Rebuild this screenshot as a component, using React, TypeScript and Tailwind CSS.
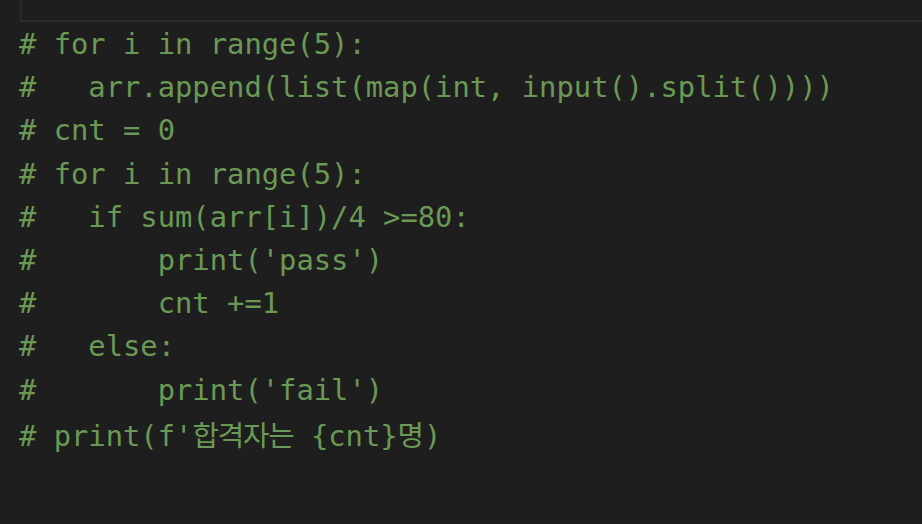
const lines = [
  "# for i in range(5):",
  "#   arr.append(list(map(int, input().split())))",
  "# cnt = 0",
  "# for i in range(5):",
  "#   if sum(arr[i])/4 >=80:",
  "#       print('pass')",
  "#       cnt +=1",
  "#   else:",
  "#       print('fail')",
];

export default function App() {
  return (
    <div className="w-[922px] h-[524px] overflow-hidden bg-[#1e1e1e]">
      <div className="ml-[20px] h-[22px] border-l-2 border-b-2 border-[#2a2a2a]" />
      <pre className="pl-[19px] pt-[1px] text-[28.8px] leading-[43.2px] text-[#6a9955] whitespace-pre font-['DejaVu_Sans_Mono','Noto_Sans_CJK_KR',monospace]">
        {lines.map((l, i) => (
          <div key={i}>{l}</div>
        ))}
        <div>
          # print(f'
          <span className="tracking-[-1.2px] font-['Noto_Sans_CJK_KR',sans-serif]">합격자는</span>{" "}
          {"{cnt}"}
          <span className="font-['Noto_Sans_CJK_KR',sans-serif]">명</span>)
        </div>
      </pre>
    </div>
  );
}
